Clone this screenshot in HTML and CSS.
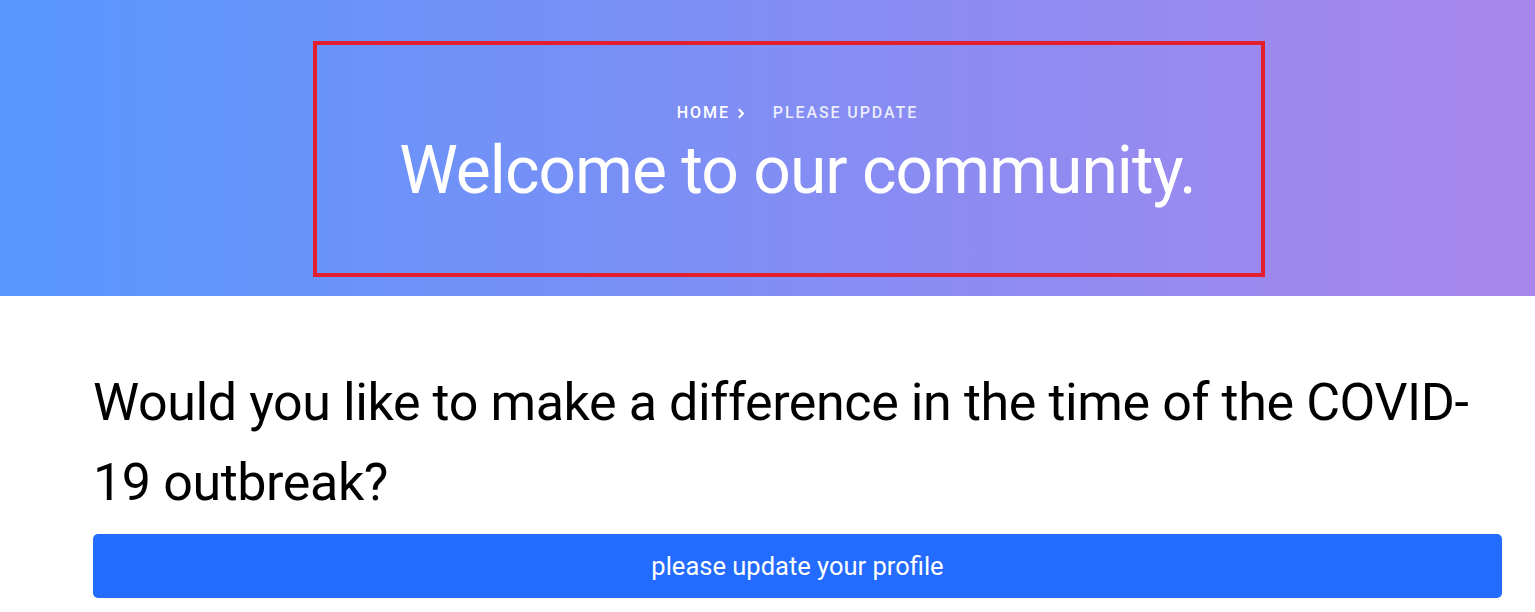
FILE: index.html
```html
<!DOCTYPE html>
<html lang="en">
<head>
<meta charset="utf-8">
<title>Welcome to our community.</title>
<link rel="stylesheet" href="styles.css">
</head>
<body>
<header class="hero">
  <div class="highlight"></div>
  <div class="container hero-inner">
    <nav class="crumbs">
      <a class="crumb" href="#">Home</a>
      <svg class="sep" width="8" height="11" viewBox="0 0 8 11" aria-hidden="true"><path d="M1.8 1.2 L6 5.5 L1.8 9.8" fill="none" stroke="#ffffff" stroke-width="2.1" stroke-linecap="butt" stroke-linejoin="miter"/></svg>
      <span class="crumb current">Please update</span>
    </nav>
    <h1 class="title">Welcome to our community.</h1>
  </div>
</header>
<main class="container content">
  <h2 class="question">Would you like to make a difference in the time of the COVID-19 outbreak?</h2>
  <a class="btn" href="#">please update your profile</a>
</main>
</body>
</html>
```

FILE: styles.css
```css
* { box-sizing: border-box; }
html, body { margin: 0; padding: 0; }
body {
  font-family: "Roboto", "Liberation Sans", sans-serif;
  background: #ffffff;
  color: #000000;
  width: 1535px;
  overflow: hidden;
}
.container {
  margin-left: 93px;
  width: 1409px;
}
.hero {
  position: relative;
  height: 296px;
  background: linear-gradient(90deg, #5797fe 0%, #8a8cf2 60%, #a987ec 100%);
}
.hero-inner {
  display: flex;
  flex-direction: column;
  align-items: center;
  padding-top: 103px;
  color: #ffffff;
}
.highlight {
  position: absolute;
  left: 313px;
  top: 41px;
  width: 952px;
  height: 236px;
  border: 4px solid #e31f2e;
}
.crumbs {
  display: flex;
  align-items: center;
  font-size: 16px;
  line-height: 20px;
  letter-spacing: 1.9px;
  text-transform: uppercase;
  font-weight: 500;
}
.crumb { color: #ffffff; text-decoration: none; }
.crumb.current { color: rgba(255,255,255,0.86); margin-left: 28px; }
.sep { display: block; margin-left: 7px; margin-top: 1px; }
.title {
  margin: 6px 0 0;
  font-size: 66px;
  line-height: 84px;
  letter-spacing: -1px;
  font-weight: 400;
}
.content {
  padding-top: 67px;
}
.question {
  margin: 0;
  font-size: 52px;
  line-height: 80px;
  letter-spacing: -0.4px;
  font-weight: 400;
}
.btn {
  display: flex;
  align-items: center;
  justify-content: center;
  margin-top: 11px;
  height: 64px;
  border-radius: 5px;
  background: #236cff;
  color: #ffffff;
  font-size: 25.5px;
  text-decoration: none;
}
```
